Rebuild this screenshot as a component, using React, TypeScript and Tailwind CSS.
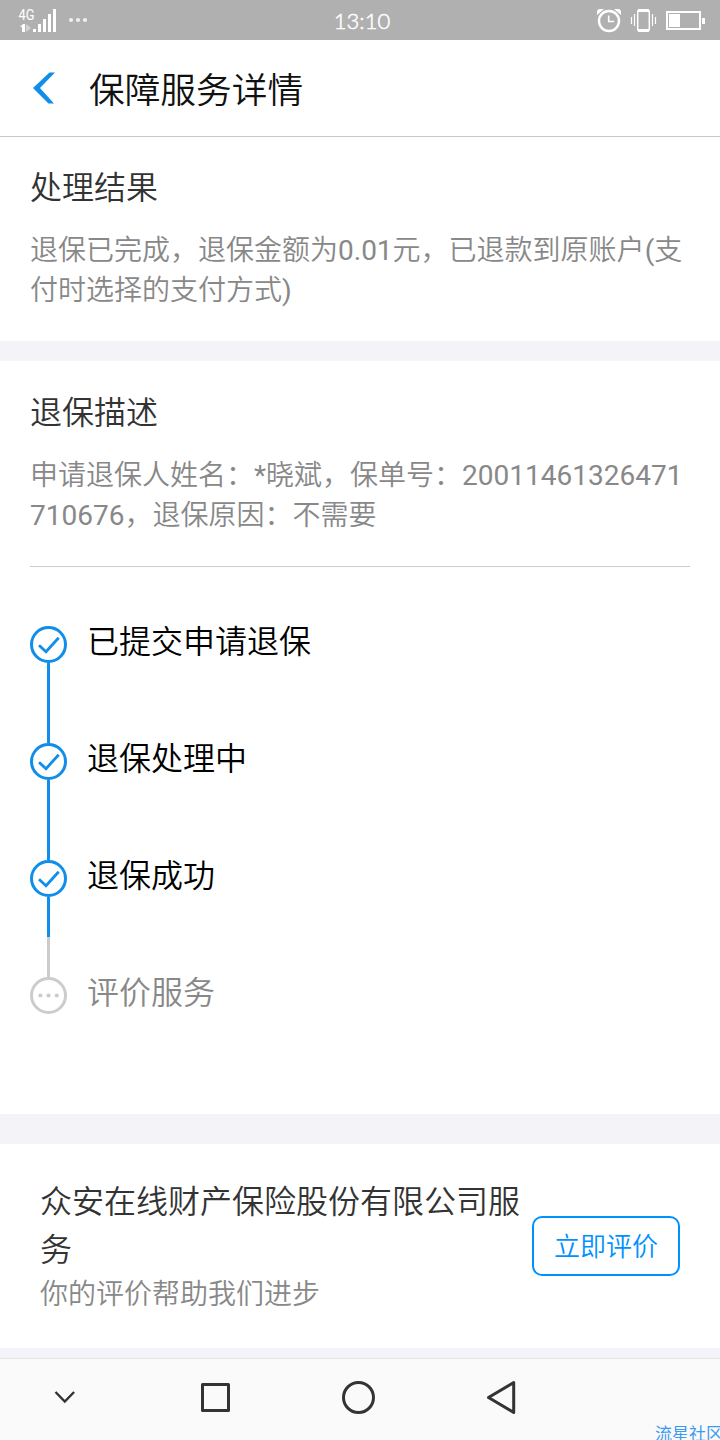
import type { ReactNode } from "react";
import { clsx } from "clsx";

interface Step {
  label: string;
  done: boolean;
}

const STEPS: Step[] = [
  { label: "已提交申请退保", done: true },
  { label: "退保处理中", done: true },
  { label: "退保成功", done: true },
  { label: "评价服务", done: false },
];

function StatusBar() {
  return (
    <div className="grid h-10 shrink-0 grid-cols-[130px_1fr_130px] bg-[#b0b0b0] text-white">
      <svg className="h-10 w-[130px]" viewBox="0 0 130 40" fill="#fff">
        <text
          x="18.5"
          y="19.5"
          fontSize="14"
          textLength="16"
          lengthAdjust="spacingAndGlyphs"
          fontFamily="Roboto"
          fontWeight="400"
        >
          4G
        </text>
        <path d="M20 27l3-3h2v8h-3v-5z" />
        <path d="M26 24l5 4-5 4z" opacity="0.45" />
        <path d="M33 29h3v3h-3zM38 24h3v8h-3zM43 19h3v13h-3zM48 14h3v18h-3zM53 9h3v23h-3z" />
        <g opacity="0.8">
          <circle cx="71" cy="20" r="2.1" />
          <circle cx="78" cy="20" r="2.1" />
          <circle cx="85" cy="20" r="2.1" />
        </g>
      </svg>
      <span className="pl-1 pt-px text-center font-[Lato,sans-serif] text-[22px] leading-10 font-light [-webkit-text-stroke:0.5px_white]">
        13:10
      </span>
      <svg className="h-10 w-[130px]" viewBox="590 0 130 40" fill="none" stroke="#fff">
        <circle cx="609" cy="21" r="10" strokeWidth="2.4" />
        <path d="M608.7 15.5v6h5.3" strokeWidth="1.6" />
        <path d="M597 15v-3q0-3 3-3h4zM621 15v-3q0-3-3-3h-4z" fill="#fff" stroke="none" />
        <path d="M631.5 17v7M655.5 17v7M634.5 14v12M652.5 14v12" strokeWidth="1.2" />
        <rect x="637.7" y="10" width="11.6" height="21" rx="2" strokeWidth="1.5" />
        <path d="M638 9h11v3h-11zM638 29h11v3h-11z" fill="#fff" stroke="none" />
        <rect x="667" y="12" width="33" height="17" strokeWidth="2" />
        <path d="M702 18h3v6h-3zM669 14h11v13h-11z" fill="#fff" stroke="none" />
      </svg>
    </div>
  );
}

function Header() {
  return (
    <header className="flex h-[97px] shrink-0 items-center border-b border-[#c8c8c8] pl-8">
      <svg className="h-8 w-6" viewBox="0 0 24 32" fill="#108ee9">
        <path d="M17.5 0.5h5.5L8 16l14 15.5h-5.5L1 16z" />
      </svg>
      <h1 className="ml-[33px] pt-1.5 text-[35.7px] leading-[54px] text-[#111]">保障服务详情</h1>
    </header>
  );
}

function Section({ title, children }: { title: string; children: ReactNode }) {
  return (
    <>
      <h2 className="text-[32px] leading-[48px] text-[#333]">{title}</h2>
      <p className="mt-[19px] text-[28px] leading-10 text-[#888]">{children}</p>
    </>
  );
}

function StepIcon({ done }: { done: boolean }) {
  if (!done) {
    return (
      <svg className="size-[37px] shrink-0" viewBox="0 0 37 37" fill="#ccc">
        <circle cx="18.5" cy="18.5" r="17" fill="none" stroke="#ccc" strokeWidth="3" />
        <circle cx="10.3" cy="18.5" r="2.1" />
        <circle cx="18.5" cy="18.5" r="2.1" />
        <circle cx="26.8" cy="18.5" r="2.1" />
      </svg>
    );
  }
  return (
    <svg className="size-[37px] shrink-0" viewBox="0 0 37 37" fill="none" stroke="#108ee9" strokeWidth="3">
      <circle cx="18.5" cy="18.5" r="17" />
      <path d="M9 19.2l7 6.5 12.7-14" strokeWidth="2.8" />
    </svg>
  );
}

function StepItem({ step, index }: { step: Step; index: number }) {
  const next = STEPS[index + 1];
  return (
    <li className="flex h-[117px]">
      <div className="flex w-[37px] flex-col items-center">
        <span
          className={clsx("h-[9px] w-[3px]", index > 0 && (step.done ? "bg-[#108ee9]" : "bg-[#ccc]"))}
        />
        <StepIcon done={step.done} />
        {next && <span className="h-10 w-[3px] bg-[#108ee9]" />}
        {next && <span className={clsx("w-[3px] flex-1", next.done ? "bg-[#108ee9]" : "bg-[#ccc]")} />}
      </div>
      <span
        className={clsx(
          "ml-5 pt-px text-[32px] leading-[48px]",
          step.done ? "text-black" : "text-[#888]",
        )}
      >
        {step.label}
      </span>
    </li>
  );
}

function NavBar() {
  return (
    <nav className="relative h-[82px] shrink-0 border-t border-[#e6e6e8] bg-[#fafafa]">
      <svg
        className="h-[81px] w-[720px]"
        viewBox="0 1359 720 81"
        fill="none"
        stroke="#333"
        strokeWidth="3"
        strokeLinejoin="round"
      >
        <path d="M55.5 1392l9.3 9.5 9.3-9.5" strokeWidth="2.4" strokeLinejoin="miter" />
        <rect x="202.5" y="1384.5" width="26" height="26" />
        <circle cx="358.5" cy="1397.5" r="15" />
        <path d="M513.7 1382.5v30l-25.2-15z" />
      </svg>
      <span className="absolute top-[66px] left-[655px] text-[17px] leading-[18px] font-normal whitespace-nowrap text-[#3b9bf0]">
        流星社区
      </span>
    </nav>
  );
}

export default function App() {
  return (
    <div className="flex h-[1440px] w-[720px] flex-col overflow-hidden bg-white font-[Roboto,'Noto_Sans_CJK_SC',sans-serif] font-[350]">
      <StatusBar />
      <Header />
      <section className="h-[204px] shrink-0 px-[30px] pt-[27px]">
        <Section title="处理结果">
          退保已完成，退保金额为<span className="font-normal">0.01</span>元，已退款到原账户
          <span className="font-normal">(</span>支付时选择的支付方式<span className="font-normal">)</span>
        </Section>
      </section>
      <div className="h-5 shrink-0 bg-[#f4f4f8]" />
      <section className="h-[753px] shrink-0 px-[30px] pt-7">
        <Section title="退保描述">
          申请退保人姓名：<span className="font-normal">*</span>晓斌，保单号：
          <span className="font-normal">20011461326471</span>
          <br />
          <span className="font-normal">710676</span>，退保原因：不需要
        </Section>
        <ol className="mt-[30px] border-t border-[#ccc] pt-[50px]">
          {STEPS.map((step, i) => (
            <StepItem key={step.label} step={step} index={i} />
          ))}
        </ol>
      </section>
      <div className="h-[30px] shrink-0 bg-[#f4f4f8]" />
      <section className="flex h-[204px] shrink-0 items-center justify-between px-10">
        <div className="w-[490px]">
          <h2 className="text-[32px] leading-[48px] text-[#333]">众安在线财产保险股份有限公司服务</h2>
          <p className="mt-px text-[28px] leading-10 text-[#888]">你的评价帮助我们进步</p>
        </div>
        <button className="h-[60px] w-[148px] shrink-0 rounded-[10px] border-2 border-[#0091ff] pt-0.5 text-[26px] text-[#0091ff]">
          立即评价
        </button>
      </section>
      <div className="h-2.5 shrink-0 bg-[#f4f4f8]" />
      <NavBar />
    </div>
  );
}
